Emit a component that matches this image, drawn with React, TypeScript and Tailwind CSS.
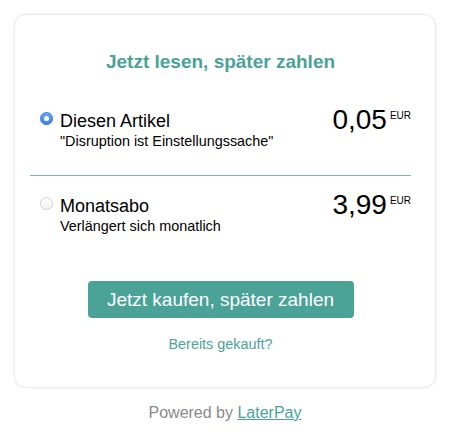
import React from "react";

function Radio({ checked }: { checked: boolean }) {
  if (checked) {
    return (
      <span className="mt-[2px] flex h-[13px] w-[13px] shrink-0 items-center justify-center rounded-full bg-[linear-gradient(#6aa8f0,#3b82e6)] shadow-[inset_0_0_0_1px_rgba(40,100,200,0.4)]">
        <span className="h-[5px] w-[5px] rounded-full bg-white" />
      </span>
    );
  }
  return (
    <span className="mt-[2px] h-[13px] w-[13px] shrink-0 rounded-full border border-[#cfcfcf] bg-[linear-gradient(#ffffff,#f1f1f1)]" />
  );
}

function Option({
  checked,
  name,
  sub,
  price,
}: {
  checked: boolean;
  name: string;
  sub: string;
  price: string;
}) {
  return (
    <div className="flex items-start justify-between pl-[10px]">
      <div className="flex items-start gap-[7px]">
        <Radio checked={checked} />
        <div>
          <div className="text-[18px] leading-[22px] text-black">{name}</div>
          <div className="text-[14.4px] leading-[18px] text-black">{sub}</div>
        </div>
      </div>
      <div className="-mt-[6px] flex items-start">
        <span className="text-[28px] leading-[32px] text-black">{price}</span>
        <span className="ml-[3px] mt-[7px] text-[10px] leading-none text-black">EUR</span>
      </div>
    </div>
  );
}

export default function App() {
  return (
    <div
      className="min-h-[442px] w-[450px] bg-white"
      style={{ fontFamily: '"Liberation Sans", Arial, Helvetica, sans-serif' }}
    >
      <div className="pt-[14px] pl-[14px]">
        <div className="w-[422px] rounded-[12px] border border-[#ececec] bg-white pb-[34px] pl-[15px] pr-[24px] pt-[36px] shadow-[0_0_3px_rgba(0,0,0,0.08)]">
          <div className="text-center text-[19px] font-bold leading-[22px] text-[#4aa397]">
            Jetzt lesen, später zahlen
          </div>
          <div className="mt-[37px]">
            <Option
              checked
              name="Diesen Artikel"
              sub={'"Disruption ist Einstellungssache"'}
              price="0,05"
            />
          </div>
          <div className="mt-[25px] h-[1px] bg-[#74bcb2]" />
          <div className="mt-[19px]">
            <Option
              checked={false}
              name="Monatsabo"
              sub="Verlängert sich monatlich"
              price="3,99"
            />
          </div>
          <div className="mt-[46px] flex justify-center">
            <button className="h-[37px] w-[266px] rounded-[4px] bg-[#4ba398] text-[19px] leading-[22px] text-white">
              Jetzt kaufen, später zahlen
            </button>
          </div>
          <div className="mt-[17px] text-center text-[14.4px] leading-[18px] text-[#4aa397]">
            Bereits gekauft?
          </div>
        </div>
      </div>
      <div className="mt-[15px] text-center text-[16px] leading-[20px] text-[#8a8a8a]">
        Powered by <span className="text-[#4aa397] underline">LaterPay</span>
      </div>
    </div>
  );
}
